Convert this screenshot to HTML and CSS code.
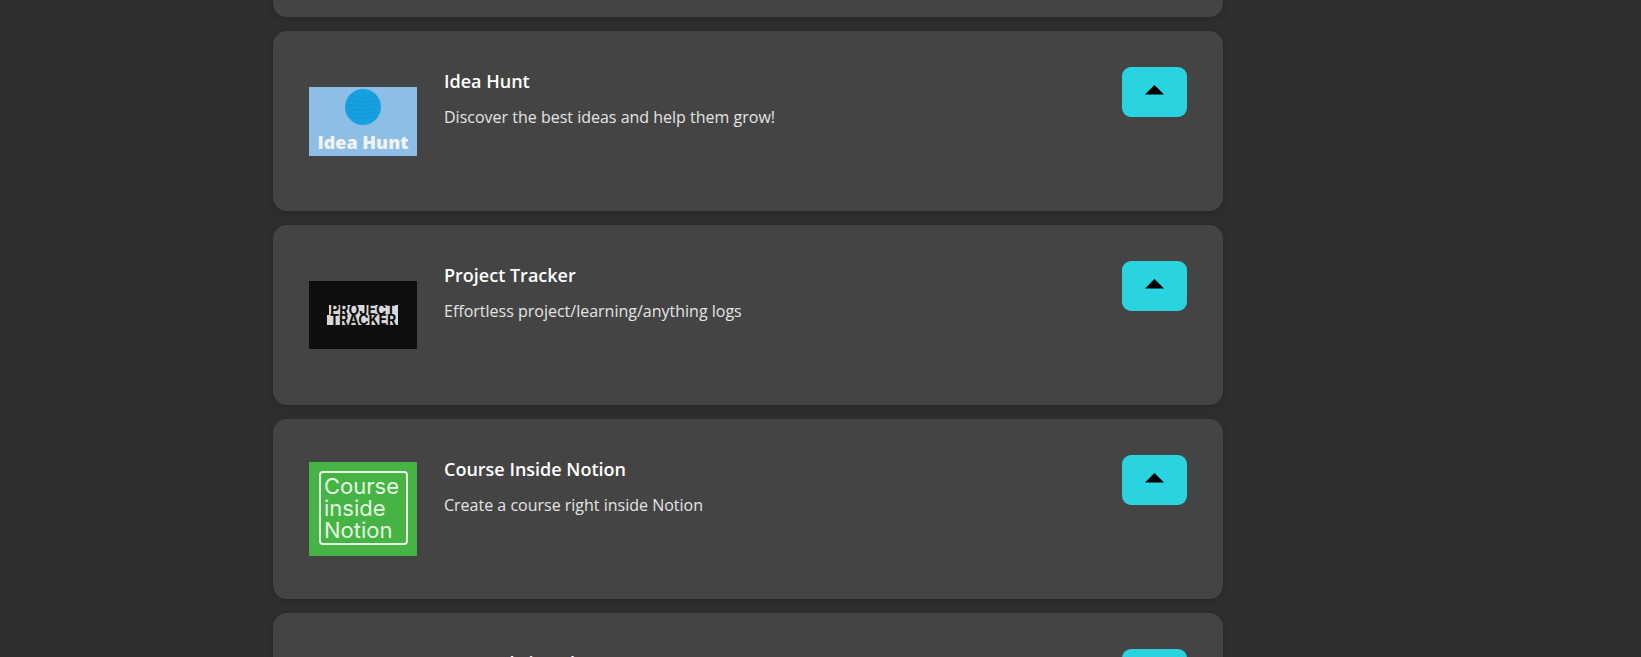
FILE: index.html
```html
<!DOCTYPE html>
<html lang="en">
<head>
<meta charset="utf-8">
<title>Products</title>
<link rel="stylesheet" href="styles.css">
</head>
<body>
<main class="list">
  <article class="card card-previous"></article>

  <article class="card">
    <svg class="thumb" viewBox="0 0 108 69" role="img" aria-label="Idea Hunt logo">
      <rect width="108" height="69" fill="#8ebee6"/>
      <circle cx="54" cy="20" r="18" fill="#16a0df"/>
      <g fill="none" stroke="#0792d5" stroke-width="1" opacity=".5">
        <path d="M42 9q12 4 24 0M39 13q15 4 30 0M38 17q16 4 32 0M38 21q16 4 32 0M38 25q16 4 32 0M41 29q13 4 26 0"/>
      </g>
      <text class="logo-idea" x="54" y="62" text-anchor="middle">Idea Hunt</text>
    </svg>
    <div class="info">
      <h2 class="title">Idea Hunt</h2>
      <p class="tagline">Discover the best ideas and help them grow!</p>
    </div>
    <button class="vote" type="button" aria-label="Upvote Idea Hunt"><svg class="arrow" viewBox="0 0 19 10"><path d="M0 9.500 9.500 0l9.500 9.500z"/></svg></button>
  </article>

  <article class="card">
    <svg class="thumb" viewBox="0 0 108 68" role="img" aria-label="Project Tracker logo">
      <rect width="108" height="68" fill="#0e0e0e"/>
      <rect x="20" y="24" width="69" height="10" fill="#d8d8d8"/>
      <rect x="18" y="34" width="71" height="10" fill="#d8d8d8"/>
      <text class="logo-tracker" x="54" y="34" text-anchor="middle">PROJECT</text>
      <text class="logo-tracker" x="54" y="44" text-anchor="middle">TRACKER</text>
    </svg>
    <div class="info">
      <h2 class="title">Project Tracker</h2>
      <p class="tagline">Effortless project/learning/anything logs</p>
    </div>
    <button class="vote" type="button" aria-label="Upvote Project Tracker"><svg class="arrow" viewBox="0 0 19 10"><path d="M0 9.500 9.500 0l9.500 9.500z"/></svg></button>
  </article>

  <article class="card">
    <svg class="thumb" viewBox="0 0 108 94" role="img" aria-label="Course Inside Notion logo">
      <rect width="108" height="94" fill="#46b345"/>
      <rect x="11" y="10" width="87" height="72" rx="3" fill="none" stroke="#e4f6e1" stroke-width="2"/>
      <text class="logo-course" x="15" y="32">Course</text>
      <text class="logo-course" x="15" y="54">inside</text>
      <text class="logo-course" x="15" y="76">Notion</text>
    </svg>
    <div class="info">
      <h2 class="title">Course Inside Notion</h2>
      <p class="tagline">Create a course right inside Notion</p>
    </div>
    <button class="vote" type="button" aria-label="Upvote Course Inside Notion"><svg class="arrow" viewBox="0 0 19 10"><path d="M0 9.500 9.500 0l9.500 9.500z"/></svg></button>
  </article>

  <article class="card">
    <div class="thumb"></div>
    <div class="info">
      <h2 class="title">Course bring about</h2>
    </div>
    <button class="vote" type="button" aria-label="Upvote"><svg class="arrow" viewBox="0 0 19 10"><path d="M0 9.500 9.500 0l9.500 9.500z"/></svg></button>
  </article>
</main>
</body>
</html>
```
FILE: styles.css
```css
* {
  box-sizing: border-box;
}

html {
  height: 100%;
  overflow: hidden;
}

body {
  height: 100%;
  margin: 0;
  overflow: hidden;
  background: #2f2f2f;
  font-family: "Open Sans", "Noto Sans", sans-serif;
}

.list {
  display: flex;
  flex-direction: column;
  gap: 14px;
  max-width: 1223px;
  padding-left: 273px;
}

.card {
  display: flex;
  flex-shrink: 0;
  align-items: flex-start;
  gap: 27px;
  min-height: 180px;
  padding: 36px;
  border-radius: 14px;
  background: #444;
  box-shadow: 0 2px 8px rgba(0, 0, 0, 0.2);
}

.card-previous {
  margin-top: -163px;
}

.thumb {
  flex: none;
  align-self: center;
  width: 108px;
}

.info {
  flex: 1;
  min-width: 0;
}

.title {
  margin: 0;
  color: #fff;
  font-size: 18px;
  font-weight: 600;
  line-height: 28px;
}

.tagline {
  margin: 9px 0 0;
  color: #e4e4e4;
  font-size: 16px;
  line-height: 26px;
}

.vote {
  display: flex;
  flex: none;
  justify-content: center;
  width: 65px;
  height: 50px;
  padding: 18px 0 0;
  border: 0;
  border-radius: 9px;
  background: #2ad3e0;
  cursor: pointer;
}

.arrow {
  width: 19px;
  height: 10px;
}

.logo-idea {
  fill: #f0f4f6;
  font: 800 18px "Open Sans", sans-serif;
}

.logo-tracker {
  fill: #0e0e0e;
  font: 700 14px Inter, sans-serif;
}

.logo-course {
  fill: #e4f6e1;
  font: 400 22px Inter, sans-serif;
}
```
